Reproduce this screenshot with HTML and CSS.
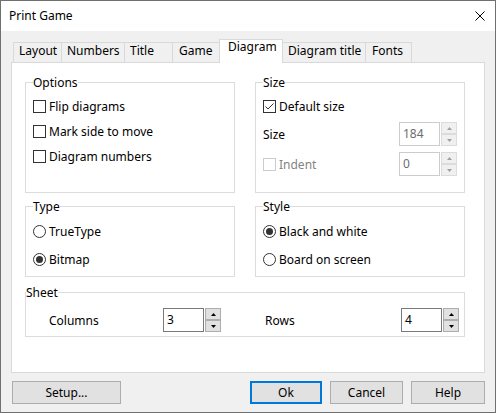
FILE: index.html
```html
<!DOCTYPE html>
<html>
<head>
<meta charset="utf-8">
<title>Print Game</title>
<link rel="stylesheet" href="styles.css">
</head>
<body>
<div class="window">
  <div class="titlebar">
    <span class="title">Print Game</span>
    <svg class="close" width="10" height="10" viewBox="0 0 10 10"><path d="M0.5 0.5 L9.5 9.5 M9.5 0.5 L0.5 9.5" stroke="#000" stroke-width="1" fill="none"/></svg>
  </div>
  <div class="content">
    <div class="tabs">
      <div class="tab t1">Layout</div>
      <div class="tab t2">Numbers</div>
      <div class="tab t3">Title</div>
      <div class="tab t4">Game</div>
      <div class="tab t5 active">Diagram</div>
      <div class="tab t6">Diagram title</div>
      <div class="tab t7">Fonts</div>
    </div>
    <div class="panel">
      <div class="groups">
        <fieldset class="group g-options">
          <legend>Options</legend>
          <div class="rows">
            <div class="row"><span class="check"></span><span>Flip diagrams</span></div>
            <div class="row"><span class="check"></span><span>Mark side to move</span></div>
            <div class="row"><span class="check"></span><span>Diagram numbers</span></div>
          </div>
        </fieldset>
        <fieldset class="group g-size">
          <legend>Size</legend>
          <div class="rows">
            <div class="row"><span class="check checked"><svg width="11" height="11" viewBox="0 0 11 11"><path d="M1.5 5.5 L4 8 L9.5 2.5" stroke="#333" stroke-width="1" fill="none"/></svg></span><span>Default size</span></div>
            <div class="field f-size">
              <span class="label">Size</span>
              <span class="edit disabled">184</span>
              <span class="spin disabled"><span class="sb"><svg width="5" height="3" viewBox="0 0 5 3"><path d="M0 3 L5 3 L2.5 0 Z"/></svg></span><span class="sb"><svg width="5" height="3" viewBox="0 0 5 3"><path d="M0 0 L5 0 L2.5 3 Z"/></svg></span></span>
            </div>
            <div class="field f-indent">
              <span class="label dim"><span class="check dis"></span><span>Indent</span></span>
              <span class="edit disabled">0</span>
              <span class="spin disabled"><span class="sb"><svg width="5" height="3" viewBox="0 0 5 3"><path d="M0 3 L5 3 L2.5 0 Z"/></svg></span><span class="sb"><svg width="5" height="3" viewBox="0 0 5 3"><path d="M0 0 L5 0 L2.5 3 Z"/></svg></span></span>
            </div>
          </div>
        </fieldset>
        <fieldset class="group g-type">
          <legend>Type</legend>
          <div class="rows radios">
            <div class="row"><span class="radio"></span><span>TrueType</span></div>
            <div class="row"><span class="radio on"></span><span>Bitmap</span></div>
          </div>
        </fieldset>
        <fieldset class="group g-style">
          <legend>Style</legend>
          <div class="rows radios">
            <div class="row"><span class="radio on"></span><span>Black and white</span></div>
            <div class="row"><span class="radio"></span><span>Board on screen</span></div>
          </div>
        </fieldset>
        <fieldset class="group g-sheet">
          <legend>Sheet</legend>
          <div class="sheet">
            <span class="label">Columns</span>
            <span class="edit">3</span>
            <span class="spin"><span class="sb"><svg width="5" height="3" viewBox="0 0 5 3"><path d="M0 3 L5 3 L2.5 0 Z"/></svg></span><span class="sb"><svg width="5" height="3" viewBox="0 0 5 3"><path d="M0 0 L5 0 L2.5 3 Z"/></svg></span></span>
            <span></span>
            <span class="label">Rows</span>
            <span class="edit">4</span>
            <span class="spin"><span class="sb"><svg width="5" height="3" viewBox="0 0 5 3"><path d="M0 3 L5 3 L2.5 0 Z"/></svg></span><span class="sb"><svg width="5" height="3" viewBox="0 0 5 3"><path d="M0 0 L5 0 L2.5 3 Z"/></svg></span></span>
          </div>
        </fieldset>
      </div>
    </div>
    <div class="buttons">
      <button class="btn b-setup">Setup...</button>
      <button class="btn b-ok">Ok</button>
      <button class="btn b-cancel">Cancel</button>
      <button class="btn b-help">Help</button>
    </div>
  </div>
</div>
</body>
</html>
```
FILE: styles.css
```css
* { box-sizing: border-box; }
html, body { margin: 0; padding: 0; }
body {
  font-family: "Noto Sans", "Segoe UI", sans-serif;
  font-size: 12px;
  color: #000;
  background: #fff;
}
.window {
  width: 496px;
  height: 413px;
  border: 1px solid #707070;
  display: flex;
  flex-direction: column;
  background: #f0f0f0;
}
.titlebar {
  height: 30px;
  flex: none;
  background: #fff;
  display: flex;
  align-items: center;
  justify-content: space-between;
  padding: 0 10px 0 8px;
}
.title { line-height: 16px; }
.close { display: block; }
.content {
  flex: 1;
  display: flex;
  flex-direction: column;
  padding: 8px 10px 0 10px;
}
.tabs {
  display: flex;
  align-items: flex-end;
  height: 23px;
  margin-left: 2px;
}
.tab {
  height: 20px;
  border: 1px solid #d9d9d9;
  border-bottom: none;
  margin-left: -1px;
  padding: 0 0 0 5px;
  line-height: 16px;
  background: #f0f0f0;
  white-space: nowrap;
}
.tab:first-child { margin-left: 0; }
.t1 { width: 49px; }
.t2 { width: 64px; }
.t3 { width: 49px; }
.t4 { width: 48px; padding-left: 6px; }
.t5 { width: 64px; }
.t6 { width: 84px; }
.t7 { width: 47px; padding-left: 6px; }
.tab.active {
  height: 24px;
  margin-bottom: -1px;
  background: #fff;
  position: relative;
  z-index: 1;
  padding-left: 8px;
  line-height: 14px;
}
.panel {
  height: 311px;
  border: 1px solid #d9d9d9;
  background: #fff;
  padding: 12px 0 0 13px;
}
.groups {
  display: grid;
  grid-template-columns: 210px 210px;
  grid-template-rows: 118px 78px 54px;
  column-gap: 20px;
  row-gap: 6px;
}
.group {
  margin: 0;
  padding: 0 7px;
  border: 1px solid #dcdcdc;
  min-width: 0;
}
.group legend {
  padding: 0;
  line-height: 15px;
}
.g-sheet { grid-column: 1 / 3; margin-top: 2px; }
.rows {
  display: flex;
  flex-direction: column;
  padding-top: 4px;
}
.row {
  display: flex;
  align-items: center;
  height: 25px;
}
.radios { padding-top: 4px; gap: 1px; }
.radios .row { height: 27px; }
.check {
  width: 13px;
  height: 13px;
  border: 1px solid #333;
  background: #fff;
  margin-right: 3px;
  flex: none;
  display: flex;
  align-items: center;
  justify-content: center;
}
.check svg { display: block; }
.check.dis { border-color: #cccccc; }
.radio {
  width: 13px;
  height: 13px;
  border: 1px solid #333;
  border-radius: 50%;
  background: #fff;
  margin-right: 3px;
  flex: none;
  display: flex;
  align-items: center;
  justify-content: center;
}
.radio.on::after {
  content: "";
  width: 7px;
  height: 7px;
  border-radius: 50%;
  background: #333;
}
.field {
  display: flex;
  align-items: center;
  height: 24px;
}
.f-size { margin-top: 3px; }
.f-indent { margin-top: 6px; }
.field .label {
  flex: 1;
  display: flex;
  align-items: center;
}
.dim { color: #838383; }
.edit {
  width: 41px;
  height: 24px;
  border: 1px solid #7a7a7a;
  background: #fff;
  padding-left: 3px;
  line-height: 22px;
  flex: none;
}
.edit.disabled { border-color: #cccccc; color: #6d6d6d; }
.spin {
  width: 16px;
  height: 24px;
  margin-left: 1px;
  display: flex;
  flex-direction: column;
  flex: none;
}
.sb {
  height: 12px;
  border: 1px solid #adadad;
  background: #e1e1e1;
  display: flex;
  align-items: center;
  justify-content: center;
}
.sb svg { display: block; fill: #000; }
.spin.disabled .sb { border-color: #dcdcdc; background: #f0f0f0; }
.spin.disabled .sb svg { fill: #a0a0a0; }
.g-sheet { padding: 0; }
.sheet {
  display: grid;
  grid-template-columns: 114px 41px 17px 44px 136px 41px 17px;
  align-items: center;
  padding: 8px 0 0 23px;
}
.sheet .spin { margin-left: 1px; }
.buttons {
  display: flex;
  margin-top: 8px;
}
.btn {
  height: 23px;
  border: 1px solid #adadad;
  background: #e1e1e1;
  font-family: "Noto Sans", "Segoe UI", sans-serif;
  font-size: 12px;
  color: #000;
  padding: 0;
  line-height: 16px;
}
.b-setup { width: 109px; margin-left: 1px; }
.b-ok { width: 72px; margin-left: auto; border: 2px solid #0078d7; }
.b-cancel { width: 73px; margin-left: 8px; }
.b-help { width: 74px; margin-left: 8px; }
```
